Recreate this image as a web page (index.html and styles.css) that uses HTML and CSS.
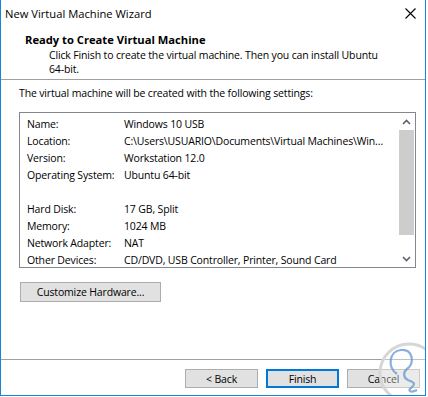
FILE: index.html
```html
<!DOCTYPE html>
<html lang="en">
<head>
  <meta charset="UTF-8" />
  <title>New Virtual Machine Wizard</title>
  <link rel="stylesheet" href="styles.css">
</head>
<body>
  <div class="window">
    <div class="titlebar">
      <span class="title">New Virtual Machine Wizard</span>
      <span class="close">
        <svg width="11" height="11" viewBox="0 0 11 11"><path d="M0.5 0.5 L10.5 10.5 M10.5 0.5 L0.5 10.5" stroke="#000" stroke-width="1.1" fill="none"/></svg>
      </span>
    </div>

    <div class="header">
      <h1>Ready to Create Virtual Machine</h1>
      <p>Click Finish to create the virtual machine. Then you can install Ubuntu<br>64-bit.</p>
    </div>

    <div class="content">
      <p class="intro">The virtual machine will be created with the following settings:</p>

      <div class="listbox">
        <div class="rows">
          <div class="row"><span class="label">Name:</span><span class="value">Windows 10 USB</span></div>
          <div class="row"><span class="label">Location:</span><span class="value">C:\Users\USUARIO\Documents\Virtual Machines\Win…</span></div>
          <div class="row"><span class="label">Version:</span><span class="value">Workstation 12.0</span></div>
          <div class="row"><span class="label">Operating System:</span><span class="value">Ubuntu 64-bit</span></div>
          <div class="row"></div>
          <div class="row"><span class="label">Hard Disk:</span><span class="value">17 GB, Split</span></div>
          <div class="row"><span class="label">Memory:</span><span class="value">1024 MB</span></div>
          <div class="row"><span class="label">Network Adapter:</span><span class="value">NAT</span></div>
          <div class="row"><span class="label">Other Devices:</span><span class="value">CD/DVD, USB Controller, Printer, Sound Card</span></div>
        </div>
        <div class="scrollbar">
          <div class="arrow">
            <svg width="9" height="6" viewBox="0 0 9 6"><path d="M1 5 L4.5 1.5 L8 5" stroke="#606060" stroke-width="1.6" fill="none"/></svg>
          </div>
          <div class="track"><div class="thumb"></div></div>
          <div class="arrow">
            <svg width="9" height="6" viewBox="0 0 9 6"><path d="M1 1 L4.5 4.5 L8 1" stroke="#606060" stroke-width="1.6" fill="none"/></svg>
          </div>
        </div>
      </div>

      <button class="btn customize">Customize Hardware...</button>
    </div>

    <div class="footer">
      <button class="btn">&lt; Back</button>
      <button class="btn default">Finish</button>
      <button class="btn">Cancel</button>
    </div>

    <svg class="watermark" width="64" height="64" viewBox="0 0 64 64">
      <circle cx="32" cy="32" r="29" fill="rgba(255,255,255,0.35)" stroke="#d6d6d6" stroke-width="3"/>
      <path d="M20 33 C10 26 12 10 24 9 C36 8 38 22 30 28 C26 31 26 37 31 39 C36 41 40 42 34 47 C30 50 34 52 40 49" stroke="#6b9bd1" stroke-width="2.2" fill="none" opacity="0.8"/>
    </svg>
  </div>
</body>
</html>
```

FILE: styles.css
```css
* {
  margin: 0;
  padding: 0;
  box-sizing: border-box;
}

body {
  background: #fff;
  font-family: "Open Sans", "Liberation Sans", sans-serif;
  font-size: 10.5px;
  letter-spacing: -0.15px;
  color: #000;
}

.window {
  position: relative;
  width: 426px;
  height: 396px;
  border: 1px solid #1883d7;
  border-top: none;
  background: #fff;
  display: flex;
  flex-direction: column;
  overflow: hidden;
}

.titlebar {
  height: 28px;
  display: flex;
  align-items: center;
  justify-content: space-between;
  padding: 0 8px 2px 4px;
  font-size: 11.2px;
  letter-spacing: 0;
}

.close {
  display: flex;
  margin-right: 1px;
}

.header {
  padding: 4px 0 3px 24px;
  border-bottom: 1px solid #a0a0a0;
}

.header h1 {
  font-size: 11.2px;
  font-weight: bold;
  letter-spacing: 0;
  line-height: 16px;
}

.header p {
  padding-left: 24px;
  line-height: 14px;
}

.content {
  flex: 1;
  padding: 6px 0 0 18px;
  border-bottom: 1px solid #a0a0a0;
}

.intro {
  line-height: 15px;
}

.listbox {
  width: 397px;
  height: 156px;
  margin-top: 11px;
  border: 1px solid #828790;
  display: flex;
}

.rows {
  flex: 1;
  min-width: 0;
  overflow: hidden;
  padding: 3px 0 0 7px;
}

.row {
  height: 17px;
  line-height: 17px;
  display: flex;
  white-space: nowrap;
}

.label {
  width: 97px;
  flex-shrink: 0;
}

.scrollbar {
  width: 17px;
  flex-shrink: 0;
  display: flex;
  flex-direction: column;
}

.arrow {
  height: 17px;
  display: flex;
  align-items: center;
  justify-content: center;
}

.track {
  flex: 1;
  padding: 0 1px;
}

.thumb {
  height: 105px;
  background: #cdcdcd;
}

.btn {
  font-family: "Open Sans", "Liberation Sans", sans-serif;
  font-size: 10.5px;
  letter-spacing: -0.15px;
  color: #000;
  background: #e1e1e1;
  border: 1px solid #adadad;
  width: 73px;
  height: 19px;
}

.btn.customize {
  display: block;
  width: 141px;
  height: 20px;
  margin: 14px 0 0 1px;
}

.btn.default {
  border: 2px solid #0078d7;
}

.footer {
  display: flex;
  justify-content: flex-end;
  gap: 8px;
  padding: 9px 5px 0 0;
  height: 35px;
}

.watermark {
  position: absolute;
  left: 376px;
  top: 341px;
}
```
